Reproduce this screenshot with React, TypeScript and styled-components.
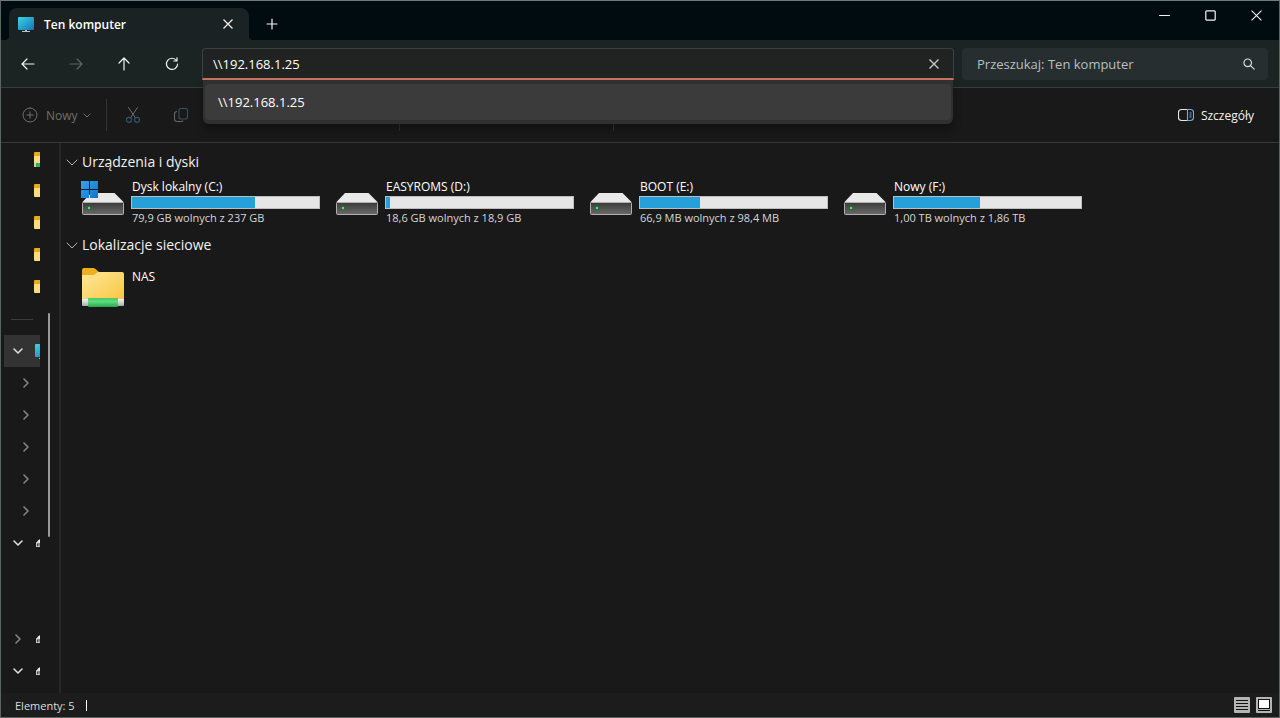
import React, { useState } from "react";
import styled, { createGlobalStyle } from "styled-components";

const GlobalStyle = createGlobalStyle`
  *, *::before, *::after { box-sizing: border-box; }
  body {
    margin: 0;
    background: #191919;
    color: #fff;
    font-family: "Open Sans", "Noto Sans", sans-serif;
    font-size: 12px;
    line-height: 17px;
  }
  button, input { font: inherit; color: inherit; }
  h1, h2, p, ul { margin: 0; padding: 0; font-weight: 400; }
  ul { list-style: none; }
  svg { display: block; flex: none; }
`;

const Window = styled.div`
  display: flex;
  flex-direction: column;
  min-height: 100vh;
  border: 1px solid #5c6361;
  border-top-color: #6f7b7a;
  background: #191919;
`;

const PlainButton = styled.button`
  display: flex;
  align-items: center;
  justify-content: center;
  padding: 0;
  border: 0;
  background: transparent;
  color: #f2f2f2;
`;

/* Title bar */

const TitleBar = styled.header`
  display: flex;
  justify-content: space-between;
  height: 39px;
  background: #000c10;
`;

const TabStrip = styled.div`
  display: flex;
  align-items: flex-end;
  padding-left: 8px;
`;

const Tab = styled.div`
  position: relative;
  display: flex;
  align-items: center;
  gap: 10px;
  width: 240px;
  height: 32px;
  padding: 0 9px 0 9px;
  border-radius: 8px 8px 0 0;
  background: #1b2223;

  &::before, &::after {
    content: "";
    position: absolute;
    bottom: 0;
    width: 4px;
    height: 4px;
  }
  &::before {
    right: 100%;
    background: radial-gradient(circle at 0 0, transparent 4px, #1b2223 4px);
  }
  &::after {
    left: 100%;
    background: radial-gradient(circle at 100% 0, transparent 4px, #1b2223 4px);
  }
`;

const TabTitle = styled.h1`
  flex: 1;
  padding-top: 1px;
  font-size: 12px;
  font-weight: 600;
`;

const TabButton = styled(PlainButton)`
  width: 24px;
  height: 32px;
`;

const NewTabButton = styled(PlainButton)`
  width: 32px;
  height: 32px;
  margin-left: 7px;
`;

const WindowControls = styled.div`
  display: flex;
`;

const WindowButton = styled(PlainButton)`
  width: 46px;
  height: 28px;
`;

/* Navigation bar */

const NavBar = styled.nav`
  display: flex;
  align-items: center;
  height: 48px;
  padding: 0 11px 0 3px;
  border-bottom: 1px solid #373d3c;
  background: #1b2323;
`;

const NavButtons = styled.div`
  display: flex;
  margin-right: 6px;
`;

const NavButton = styled(PlainButton)`
  width: 48px;
  height: 32px;
  &:disabled { color: #5e6565; }
`;

const AddressBox = styled.div`
  position: relative;
  display: flex;
  flex: 1;
  height: 32px;
  margin-right: 8px;
  border: 1px solid #3a4141;
  border-bottom: 2px solid #c97562;
  border-radius: 4px 4px 0 0;
  background: #212322;
`;

const TextInput = styled.input`
  flex: 1;
  min-width: 0;
  padding: 2px 0 0 10px;
  border: 0;
  outline: 0;
  background: transparent;
  font-size: 13px;
  &::placeholder { color: #b9bfbe; opacity: 1; }
`;

const ClearButton = styled(PlainButton)`
  width: 39px;
  padding-top: 1px;
  color: #c8c8c8;
`;

const Suggestions = styled.ul`
  position: absolute;
  z-index: 2;
  top: 100%;
  left: 0;
  right: 0;
  margin-top: 2px;
  padding: 4px 2px;
  border-radius: 0 0 6px 6px;
  background: #303030;
  box-shadow: 0 6px 8px rgba(0, 0, 0, 0.3);
`;

const Suggestion = styled.li`
  display: flex;
  align-items: center;
  height: 36px;
  padding: 2px 0 0 13px;
  border-radius: 4px;
  background: #3b3b3b;
  font-size: 13px;
`;

const SearchBox = styled.div`
  display: flex;
  align-items: center;
  width: 306px;
  height: 32px;
  padding: 0 4px 0 5px;
  border-radius: 4px;
  background: #272e2f;
`;

const SearchButton = styled(PlainButton)`
  width: 30px;
  height: 32px;
  color: #d5d9d8;
`;

/* Command bar */

const CommandBar = styled.div`
  display: flex;
  align-items: center;
  height: 55px;
  padding: 0 25px 0 21px;
  border-bottom: 1px solid #383838;
`;

const ButtonLabel = styled.span`
  padding-top: 1px;
`;

const NewButton = styled(PlainButton)`
  gap: 8px;
  &:disabled { color: #6f6f6f; }
`;

const Caret = styled.span`
  margin-left: -4px;
`;

const CommandButton = styled(PlainButton)`
  width: 48px;
  height: 32px;
`;

const Separator = styled.span<{ $before: number; $after?: number }>`
  width: 1px;
  height: 32px;
  margin-left: ${(p) => p.$before}px;
  margin-right: ${(p) => p.$after ?? 0}px;
  background: #333;
`;

const DetailsButton = styled(PlainButton)`
  gap: 7px;
  margin-left: auto;
`;

/* Body */

const Body = styled.div`
  display: flex;
  flex: 1;
`;

const Sidebar = styled.aside`
  display: flex;
  gap: 8px;
  width: 60px;
  border-right: 2px solid #272727;
`;

const Tree = styled.ul`
  width: 39px;
  padding-left: 3px;
  overflow: hidden;
`;

const TreeRow = styled.li<{ $selected?: boolean; $inset?: boolean }>`
  display: flex;
  align-items: center;
  gap: 9px;
  height: 32px;
  padding-left: ${(p) => (p.$inset ? 14 : 6)}px;
  background: ${(p) => (p.$selected ? "#333" : "transparent")};
`;

const PinnedRow = styled(TreeRow)`
  padding-left: 30px;
`;

const TreeDivider = styled.hr`
  width: 22px;
  margin: 0 0 0 1px;
  border: 0;
  border-top: 1px solid #3d3d3d;
`;

const TreeToggle = styled(PlainButton)<{ $dim?: boolean }>`
  flex: none;
  width: 16px;
  height: 16px;
  color: ${(p) => (p.$dim ? "#858585" : "#dcdcdc")};
`;

const ScrollThumb = styled.div`
  width: 2px;
  height: 224px;
  margin-top: 170px;
  border-radius: 1px;
  background: #9a9a9a;
`;

const Main = styled.main`
  flex: 1;
  min-width: 0;
  padding: 9px 20px 16px 5px;
`;

const GroupHeader = styled.h2`
  display: flex;
  align-items: center;
  font-size: 14px;
  line-height: 20px;
`;

const GroupToggle = styled(PlainButton)`
  gap: 4px;
`;

const GroupChevron = styled.span`
  color: #b0b0b0;
`;

const Items = styled.div`
  display: grid;
  grid-template-columns: repeat(auto-fill, 254px);
  padding: 7px 0 9px 14px;
`;

const Item = styled.article`
  display: flex;
  gap: 6px;
  height: 47px;
  font-size: 12px;
`;

const ItemIcon = styled.div`
  flex: none;
  width: 45px;
`;

const ItemText = styled.div`
  width: 189px;
`;

const ItemLine = styled.p`
  padding-left: 1px;
  line-height: 16px;
  white-space: nowrap;
`;

const ItemNote = styled(ItemLine)`
  color: #d6d6d6;
  font-size: 11px;
  line-height: 17px;
`;

const Meter = styled.div`
  height: 13px;
  margin-top: 1px;
  border: 1px solid #bdbdbd;
  background: #e6e6e6;
`;

const MeterFill = styled.div`
  height: 100%;
  background: #26a0da;
`;

const NetworkItem = styled(Item)`
  padding-top: 6px;
`;

const NetworkText = styled(ItemText)`
  padding-top: 1px;
`;

/* Status bar */

const StatusBar = styled.footer`
  display: flex;
  align-items: center;
  height: 24px;
  padding: 0 7px 0 14px;
  background: #1c1c1c;
  color: #dedede;
  font-size: 11px;
`;

const StatusMark = styled.span`
  width: 1px;
  height: 11px;
  margin-left: 11px;
  background: #fff;
`;

const ViewButtons = styled.div`
  display: flex;
  gap: 6px;
  margin-left: auto;
`;

/* Icons */

const Cross = ({ size = 10, width = 1.2 }: { size?: number; width?: number }) => (
  <svg width={size} height={size} viewBox="0 0 10 10" fill="none" stroke="currentColor" strokeWidth={width}>
    <path d="M.5.5l9 9M9.5.5l-9 9" />
  </svg>
);

const Stroke = ({ d, size = 16, width = 1.2 }: { d: string; size?: number; width?: number }) => (
  <svg width={size} height={size} viewBox={`0 0 ${size} ${size}`} fill="none" stroke="currentColor" strokeWidth={width} strokeLinecap="round" strokeLinejoin="round">
    <path d={d} />
  </svg>
);

const ComputerIcon = () => (
  <svg width="16" height="16" viewBox="0 0 16 16">
    <defs>
      <linearGradient id="screen" x1="0" y1="0" x2="1" y2="1">
        <stop offset="0" stopColor="#3fd3e6" />
        <stop offset="1" stopColor="#1173b8" />
      </linearGradient>
    </defs>
    <rect x="0" y="1" width="16" height="13" rx="1" fill="url(#screen)" />
    <path d="M7 14h2v1h3v1H4v-1h3z" fill="#b9c2c6" />
  </svg>
);

const SmallFolderIcon = ({ network }: { network?: boolean }) => (
  <svg width="16" height="16" viewBox="0 0 16 16">
    <path d="M0 2q0-1 1-1h5l2 2h8v4H0z" fill="#eda91c" />
    <rect y="5" width="16" height="9" rx="1" fill="#fbdc7c" />
    {network && <path d="M0 12h16v4H0z" fill="#b9d6a4" />}
    {network && <path d="M2 12h12v4H2z" fill="#2fb25a" />}
  </svg>
);

const SmallDriveIcon = () => (
  <svg width="16" height="16" viewBox="0 0 16 16">
    <path d="M4 4.500h8l3 3.500H1z" fill="#efefef" />
    <rect x="1.500" y="8" width="13" height="3.500" fill="#4a4a4a" stroke="#c9c9c9" />
    <path d="M3 10h2" stroke="#9fdcae" />
  </svg>
);

const DriveIcon = ({ system }: { system?: boolean }) => (
  <svg width="45" height="40" viewBox="0 0 45 40">
    <defs>
      <linearGradient id="driveFront" x1="0" y1="0" x2="0" y2="1">
        <stop offset="0" stopColor="#3a3a3a" />
        <stop offset="1" stopColor="#6a6a6a" />
      </linearGradient>
      <linearGradient id="logo" x1="0" y1="0" x2="1" y2="1">
        <stop offset="0" stopColor="#37a5e8" />
        <stop offset="1" stopColor="#0f74cd" />
      </linearGradient>
    </defs>
    <path d="M11 14h23.500l9.500 9.500h-42z" fill="#e9e9e9" />
    <rect x="2.500" y="23.500" width="41" height="12" rx="1" fill="url(#driveFront)" stroke="#b0b0b0" />
    <circle cx="9" cy="29" r="2.200" fill="#1c6b34" />
    <circle cx="9" cy="29" r="1.200" fill="#5be07f" />
    {system && <path d="M1 2h8v8H1zM10 2h8v8h-8zM1 11h8v8H1zM10 11h8v8h-8z" fill="url(#logo)" />}
  </svg>
);

const NetworkFolderIcon = () => (
  <svg width="45" height="40" viewBox="0 0 45 40">
    <defs>
      <linearGradient id="folder" x1="0" y1="0" x2="1" y2="1">
        <stop offset="0" stopColor="#ffe69a" />
        <stop offset="1" stopColor="#f9c63c" />
      </linearGradient>
      <linearGradient id="cable" x1="0" y1="0" x2="0" y2="1">
        <stop offset="0" stopColor="#4fc56c" />
        <stop offset="0.400" stopColor="#5be07c" />
        <stop offset="1" stopColor="#2aa64c" />
      </linearGradient>
      <linearGradient id="cableEnd" x1="0" y1="0" x2="0" y2="1">
        <stop offset="0" stopColor="#f4f4f4" />
        <stop offset="1" stopColor="#a9adb0" />
      </linearGradient>
    </defs>
    <path d="M2 2q0-2 2-2h9q1.500 0 2.500 1L19 4v8H2z" fill="#efae1d" />
    <path d="M2 7h11q1.500 0 2.500-1l1-1q1-1 2.500-1h23q2 0 2 2v30H2z" fill="url(#folder)" />
    <rect x="2" y="31" width="42" height="7" rx="1" fill="url(#cableEnd)" />
    <rect x="8" y="30" width="30" height="9" rx="1" fill="url(#cable)" />
  </svg>
);

const ScissorsIcon = () => (
  <svg width="16" height="18" viewBox="0 0 16 18" fill="none" strokeLinecap="round">
    <path d="M3.500 1.500l6.800 10.200M12.500 1.500L5.700 11.700" stroke="#6d6d6d" />
    <circle cx="4" cy="13.800" r="2.500" stroke="#2f566b" strokeWidth="1.200" />
    <circle cx="12" cy="13.800" r="2.500" stroke="#2f566b" strokeWidth="1.200" />
  </svg>
);

const CopyIcon = () => (
  <svg width="16" height="16" viewBox="0 0 16 16" fill="none">
    <rect x="6" y="1.500" width="8.500" height="10.500" rx="2" stroke="#36505e" strokeWidth="1.100" />
    <path d="M4 4.500Q1.500 4.500 1.500 7v5q0 2.500 2.500 2.500h4q1.500 0 2-1" stroke="#666" strokeWidth="1.100" />
  </svg>
);

const DetailsIcon = () => (
  <svg width="16" height="14" viewBox="0 0 16 14" fill="none">
    <path d="M9 1.500H3.500q-3 0-3 3v5q0 3 3 3H9" stroke="#e8e8e8" strokeWidth="1.100" />
    <path d="M9.500 1.500h3q3 0 3 3v5q0 3-3 3h-3zM11.500 5h2M11.500 7h2M11.500 9h2" stroke="#5fb4e6" strokeWidth="1.100" />
  </svg>
);

const ListViewIcon = () => (
  <svg width="16" height="16" viewBox="0 0 16 16">
    <rect width="16" height="16" rx="1" fill="#b4b4b4" />
    <path d="M2 3.500h12M2 6.500h12M2 9.500h12M2 12.500h12" stroke="#111" />
  </svg>
);

const TileViewIcon = () => (
  <svg width="16" height="16" viewBox="0 0 16 16">
    <rect width="16" height="16" rx="1" fill="#b4b4b4" />
    <rect x="2.500" y="2.500" width="11" height="9" fill="#fff" stroke="#111" />
    <path d="M2 13.500h12" stroke="#111" />
  </svg>
);

const chevronDown = "M4 6l4 4 4-4";
const chevronRight = "M6 4l4 4-4 4";

const drives = [
  { name: "Dysk lokalny (C:)", space: "79,9 GB wolnych z 237 GB", used: 66, system: true },
  { name: "EASYROMS (D:)", space: "18,6 GB wolnych z 18,9 GB", used: 2 },
  { name: "BOOT (E:)", space: "66,9 MB wolnych z 98,4 MB", used: 32 },
  { name: "Nowy (F:)", space: "1,00 TB wolnych z 1,86 TB", used: 46 },
];

export default function App() {
  const [address, setAddress] = useState("\\\\192.168.1.25");

  return (
    <>
      <GlobalStyle />
      <Window>
        <TitleBar>
          <TabStrip>
            <Tab>
              <ComputerIcon />
              <TabTitle>Ten komputer</TabTitle>
              <TabButton aria-label="Zamknij kartę"><Cross size={10} /></TabButton>
            </Tab>
            <NewTabButton aria-label="Nowa karta"><Stroke size={12} d="M6 1v10M1 6h10" width={1.2} /></NewTabButton>
          </TabStrip>
          <WindowControls>
            <WindowButton aria-label="Minimalizuj"><Stroke size={11} d="M.5 5.500h10" width={1} /></WindowButton>
            <WindowButton aria-label="Maksymalizuj"><Stroke size={11} d="M1.500.8h8l.7.7v8l-.7.7h-8l-.7-.7v-8z" width={1.2} /></WindowButton>
            <WindowButton aria-label="Zamknij"><Cross size={11} width={1} /></WindowButton>
          </WindowControls>
        </TitleBar>

        <NavBar>
          <NavButtons>
            <NavButton aria-label="Wstecz"><Stroke d="M14 8H2.500M7 3L2 8l5 5" /></NavButton>
            <NavButton aria-label="Dalej" disabled><Stroke d="M2 8h11.500M9 3l5 5-5 5" /></NavButton>
            <NavButton aria-label="W górę"><Stroke d="M8 14V2.500M3 7l5-5 5 5" /></NavButton>
            <NavButton aria-label="Odśwież"><Stroke d="M12.500 4.500A5.600 5.600 0 1 0 13.600 8M13 1.800v3.200H9.800" /></NavButton>
          </NavButtons>
          <AddressBox>
            <TextInput aria-label="Adres" value={address} onChange={(e) => setAddress(e.target.value)} />
            <ClearButton aria-label="Wyczyść"><Cross size={10} width={1.4} /></ClearButton>
            <Suggestions>
              <Suggestion>{"\\\\192.168.1.25"}</Suggestion>
            </Suggestions>
          </AddressBox>
          <SearchBox>
            <TextInput aria-label="Szukaj" placeholder="Przeszukaj: Ten komputer" />
            <SearchButton aria-label="Szukaj">
              <Stroke size={12} d="M8.500 4.800a3.800 3.800 0 1 1-7.600 0 3.800 3.800 0 0 1 7.600 0M7.600 7.600L11.200 11.200" />
            </SearchButton>
          </SearchBox>
        </NavBar>

        <CommandBar>
          <NewButton disabled>
            <Stroke d="M8 1a7 7 0 1 1 0 14A7 7 0 0 1 8 1M8 4.800v6.400M4.800 8h6.400" width={1} />
            <ButtonLabel>Nowy</ButtonLabel>
            <Caret><Stroke size={10} d="M2 4l3 3 3-3" width={1} /></Caret>
          </NewButton>
          <Separator $before={14} $after={2} />
          <CommandButton disabled aria-label="Wytnij"><ScissorsIcon /></CommandButton>
          <CommandButton disabled aria-label="Kopiuj"><CopyIcon /></CommandButton>
          <Separator $before={194} />
          <Separator $before={213} />
          <DetailsButton><DetailsIcon /><ButtonLabel>Szczegóły</ButtonLabel></DetailsButton>
        </CommandBar>

        <Body>
          <Sidebar>
            <Tree>
              <PinnedRow><SmallFolderIcon network /></PinnedRow>
              <PinnedRow><SmallFolderIcon /></PinnedRow>
              <PinnedRow><SmallFolderIcon /></PinnedRow>
              <PinnedRow><SmallFolderIcon /></PinnedRow>
              <PinnedRow><SmallFolderIcon /></PinnedRow>
              <TreeRow><TreeDivider /></TreeRow>
              <TreeRow $selected>
                <TreeToggle aria-label="Zwiń"><Stroke d={chevronDown} width={1.6} /></TreeToggle>
                <ComputerIcon />
              </TreeRow>
              {[0, 1, 2, 3, 4].map((n) => (
                <TreeRow key={n} $inset>
                  <TreeToggle $dim aria-label="Rozwiń"><Stroke d={chevronRight} width={1.6} /></TreeToggle>
                </TreeRow>
              ))}
              <TreeRow>
                <TreeToggle aria-label="Zwiń"><Stroke d={chevronDown} width={1.6} /></TreeToggle>
                <SmallDriveIcon />
              </TreeRow>
              <TreeRow />
              <TreeRow />
              <TreeRow>
                <TreeToggle $dim aria-label="Rozwiń"><Stroke d={chevronRight} width={1.6} /></TreeToggle>
                <SmallDriveIcon />
              </TreeRow>
              <TreeRow>
                <TreeToggle aria-label="Zwiń"><Stroke d={chevronDown} width={1.6} /></TreeToggle>
                <SmallDriveIcon />
              </TreeRow>
            </Tree>
            <ScrollThumb />
          </Sidebar>

          <Main>
            <GroupHeader>
              <GroupToggle>
                <GroupChevron><Stroke size={12} d="M1 4l5 5 5-5" width={1} /></GroupChevron>
                Urządzenia i dyski
              </GroupToggle>
            </GroupHeader>
            <Items>
              {drives.map((drive) => (
                <Item key={drive.name}>
                  <ItemIcon><DriveIcon system={drive.system} /></ItemIcon>
                  <ItemText>
                    <ItemLine>{drive.name}</ItemLine>
                    <Meter role="meter" aria-label={drive.name} aria-valuenow={drive.used} aria-valuemin={0} aria-valuemax={100}>
                      <MeterFill style={{ width: `${drive.used}%` }} />
                    </Meter>
                    <ItemNote>{drive.space}</ItemNote>
                  </ItemText>
                </Item>
              ))}
            </Items>
            <GroupHeader>
              <GroupToggle>
                <GroupChevron><Stroke size={12} d="M1 4l5 5 5-5" width={1} /></GroupChevron>
                Lokalizacje sieciowe
              </GroupToggle>
            </GroupHeader>
            <Items>
              <NetworkItem>
                <ItemIcon><NetworkFolderIcon /></ItemIcon>
                <NetworkText><ItemLine>NAS</ItemLine></NetworkText>
              </NetworkItem>
            </Items>
          </Main>
        </Body>

        <StatusBar>
          Elementy: 5
          <StatusMark />
          <ViewButtons>
            <PlainButton aria-label="Szczegóły"><ListViewIcon /></PlainButton>
            <PlainButton aria-label="Duże ikony"><TileViewIcon /></PlainButton>
          </ViewButtons>
        </StatusBar>
      </Window>
    </>
  );
}
